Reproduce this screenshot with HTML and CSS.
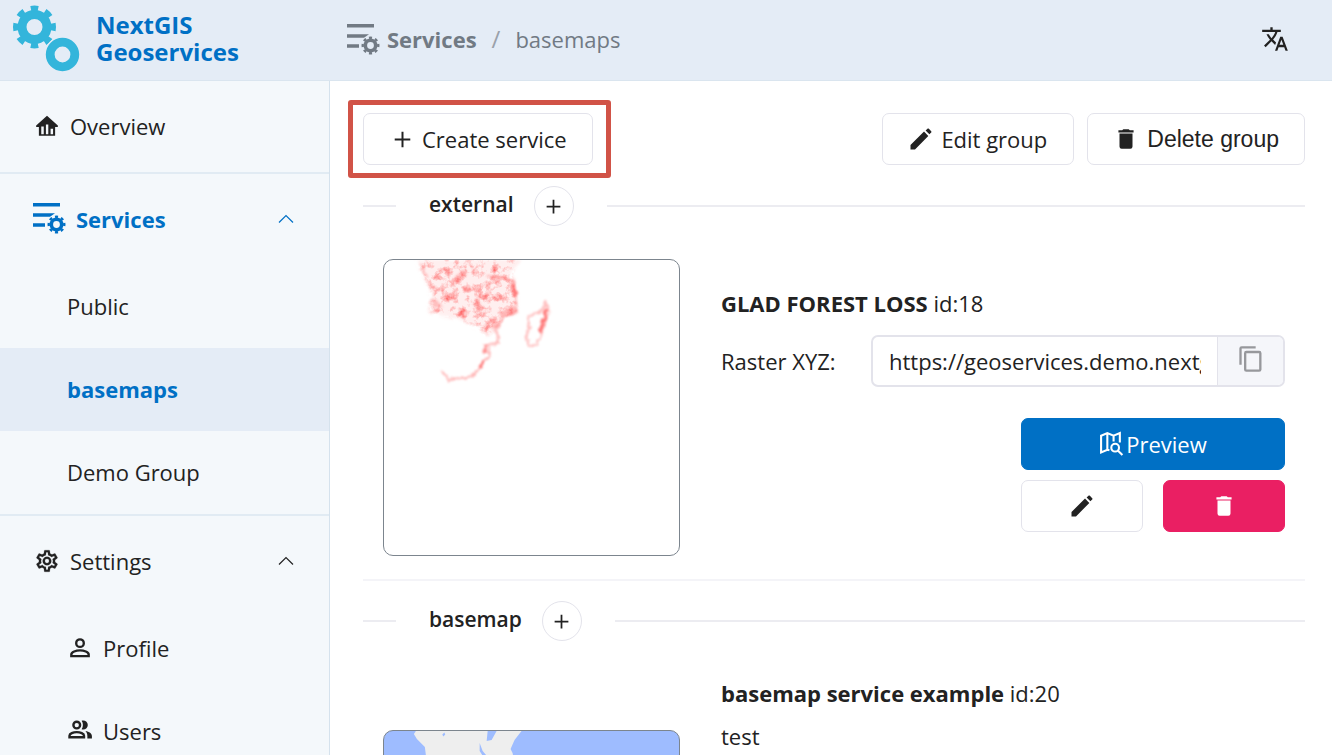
FILE: index.html
```html
<!DOCTYPE html>
<html lang="en">
<head>
<meta charset="utf-8">
<title>NextGIS Geoservices</title>
<link rel="stylesheet" href="styles.css">
</head>
<body>
<svg class="sprite" aria-hidden="true">
  <symbol id="i-services" viewBox="0 0 33 31">
    <path fill="currentColor" d="M0 0h27v3.6H0zM0 10.2h22l-5 3.6H0zM0 20.200h12v3.600H0z"/>
    <g fill="none" stroke="currentColor">
      <circle cx="23.500" cy="21.500" r="5.200" stroke-width="3.600"/>
      <circle cx="23.500" cy="21.500" r="7.800" stroke-width="2.400" pathLength="16" stroke-dasharray="1" transform="rotate(-11.250 23.500 21.500)"/>
    </g>
  </symbol>
  <symbol id="i-plus" viewBox="0 0 24 24"><path fill="none" stroke="currentColor" stroke-width="2.800" d="M12 1v22M1 12h22"/></symbol>
  <symbol id="i-pencil" viewBox="0 0 24 24"><path fill="currentColor" d="M20.710 4.040c.39-.39.39-1.040 0-1.410l-2.340-2.340c-.37-.39-1.020-.39-1.410 0l-1.840 1.830 3.750 3.750M0 16.500V21h4.500L17.810 7.400l-4.300-4.300L0 16.500z" transform="translate(1.500 1.500)"/></symbol>
  <symbol id="i-trash" viewBox="0 0 24 24"><path fill="currentColor" d="M19 4h-3.500l-1-1h-5l-1 1H5v2h14M6 19a2 2 0 0 0 2 2h8a2 2 0 0 0 2-2V7H6v12z"/></symbol>
  <symbol id="i-chevron" viewBox="0 0 16 10"><path fill="none" stroke="currentColor" stroke-width="1.200" d="M1 8.500l7-7 7 7"/></symbol>
</svg>

<header class="header">
  <a class="brand" href="#">
    <svg class="brand-logo" viewBox="0 0 68 68" aria-hidden="true">
      <g fill="none" stroke="#33b5db">
        <circle cx="22.500" cy="22" r="12.500" stroke-width="9"/>
        <circle cx="22.500" cy="22" r="18.600" stroke-width="5.800" pathLength="16" stroke-dasharray="1" transform="rotate(-11.250 22.500 22)"/>
        <circle cx="50.500" cy="49.500" r="13" stroke="#e4ecf6" stroke-width="10"/>
        <circle cx="50.500" cy="49.500" r="12.300" stroke-width="8.800"/>
      </g>
    </svg>
    <span class="brand-name">NextGIS Geoservices</span>
  </a>
  <nav class="breadcrumb" aria-label="Breadcrumb">
    <a class="crumb" href="#"><svg class="icon-services"><use href="#i-services"/></svg>Services</a>
    <span class="crumb-separator">/</span>
    <span>basemaps</span>
  </nav>
  <button class="language" type="button" aria-label="Language">
    <svg viewBox="0 0 24 24"><path fill="currentColor" d="M12.900 15l-2.600-2.500h.1c1.700-1.900 3-4.100 3.700-6.500H17V4h-7V2H8v2H1v2h11.200c-.7 1.900-1.800 3.800-3.200 5.300C8.100 10.300 7.300 9.200 6.700 8h-2c.7 1.600 1.700 3.200 3 4.600l-5.100 5L4 19l5-5 3.100 3.100.8-2.100M18.500 10h-2L12 22h2l1.100-3h4.800l1.100 3h2l-4.500-12m-2.600 7l1.600-4.300 1.600 4.300h-3.200z"/></svg>
  </button>
</header>

<div class="shell">
  <nav class="sidebar" aria-label="Main">
    <div class="menu-group">
      <a class="menu-title" href="#">
        <svg class="icon-menu" viewBox="0 0 24 24"><path fill="#222" fill-rule="evenodd" d="M12 2.500L22 11.500V13h-2.500v8h-15v-8H2v-1.500zM6.700 12.500v7H9v-7zM11 10.500v9h2.200v-9zM15.300 14.500v5h2.300v-5z"/></svg>Overview
      </a>
    </div>
    <div class="menu-group">
      <button class="menu-title menu-title-active" type="button" aria-expanded="true">
        <svg class="icon-services"><use href="#i-services"/></svg>Services
        <svg class="chevron"><use href="#i-chevron"/></svg>
      </button>
      <a class="menu-item" href="#">Public</a>
      <a class="menu-item menu-item-active" href="#">basemaps</a>
      <a class="menu-item" href="#">Demo Group</a>
    </div>
    <div class="menu-group">
      <button class="menu-title" type="button" aria-expanded="true">
        <svg class="icon-menu" viewBox="0 0 24 24"><path fill="currentColor" stroke="currentColor" stroke-width=".2" d="M12 8a4 4 0 0 1 4 4 4 4 0 0 1-4 4 4 4 0 0 1-4-4 4 4 0 0 1 4-4m0 2a2 2 0 0 0-2 2 2 2 0 0 0 2 2 2 2 0 0 0 2-2 2 2 0 0 0-2-2m-2 12c-.25 0-.46-.18-.5-.42l-.37-2.650c-.63-.25-1.170-.59-1.690-.99l-2.490 1.010c-.22.080-.49 0-.61-.22l-2-3.460a.493.493 0 0 1 .12-.64l2.110-1.660L4.500 12l.07-1-2.110-1.630a.493.493 0 0 1-.12-.64l2-3.460c.12-.22.39-.31.61-.22l2.490 1c.52-.39 1.060-.73 1.690-.98l.37-2.650c.04-.24.25-.42.5-.42h4c.25 0 .46.18.5.42l.37 2.650c.63.25 1.170.59 1.690.98l2.490-1c.22-.09.49 0 .61.22l2 3.460c.13.220.07.490-.12.640L19.430 11l.07 1-.07 1 2.110 1.630c.19.150.25.420.12.640l-2 3.460c-.12.220-.39.310-.61.220l-2.490-1c-.52.390-1.060.730-1.690.980l-.37 2.650c-.04.240-.25.420-.5.420h-4m1.250-18l-.37 2.610c-1.200.25-2.260.89-3.030 1.780L5.440 7.350l-.75 1.300L6.800 10.200a5.550 5.550 0 0 0 0 3.600l-2.120 1.560.75 1.300 2.430-1.040c.77.880 1.820 1.520 3.010 1.760l.37 2.620h1.520l.37-2.610c1.190-.25 2.240-.89 3.010-1.770l2.430 1.040.75-1.300-2.120-1.550c.4-1.170.4-2.440 0-3.610l2.110-1.550-.75-1.300-2.410 1.040a5.420 5.420 0 0 0-3.030-1.770L12.750 4h-1.500z"/></svg>Settings
        <svg class="chevron"><use href="#i-chevron"/></svg>
      </button>
      <a class="menu-item" href="#">
        <svg class="icon-menu" viewBox="0 0 24 24"><g fill="none" stroke="currentColor" stroke-width="2.200"><circle cx="12" cy="7.500" r="3.500"/><path d="M4 19.500v-1.500c0-2.300 4.300-3.800 8-3.800s8 1.500 8 3.800v1.500z"/></g></svg>Profile
      </a>
      <a class="menu-item" href="#">
        <svg class="icon-menu" viewBox="0 0 24 24"><g fill="none" stroke="currentColor" stroke-width="2.200"><circle cx="9" cy="6.500" r="3.100"/><path d="M2.300 17.800v-1.500c0-1.900 3.400-3.300 6.700-3.300s6.700 1.400 6.700 3.300v1.500z"/></g><path fill="currentColor" d="M13.500 2.600c3-.8 5.700 1 5.700 3.900s-2.700 4.800-5.700 3.900c1.600-2.200 1.600-5.600 0-7.800zM17 11.900c3.600.6 6 2.200 6 4.800v2.200h-4.200v-2.300c0-2-.6-3.600-1.800-4.700z"/></svg>Users
      </a>
    </div>
  </nav>

  <main class="content">
    <div class="toolbar">
      <div class="callout"><button class="btn btn-create" type="button"><svg class="icon-plus"><use href="#i-plus"/></svg>Create service</button></div>
      <div class="toolbar-actions">
        <button class="btn btn-edit" type="button"><svg class="icon"><use href="#i-pencil"/></svg>Edit group</button>
        <button class="btn btn-delete" type="button"><svg class="icon-trash"><use href="#i-trash"/></svg>Delete group</button>
      </div>
    </div>

    <div class="divider">
      <h2>external</h2>
      <button class="btn-round" type="button" aria-label="Add external service"><svg><use href="#i-plus"/></svg></button>
    </div>
    <section class="service">
      <svg class="thumb" viewBox="0 0 296 296" role="img" aria-label="Forest loss map">
        <defs>
          <filter id="grain" x="0" y="0" width="296" height="296" filterUnits="userSpaceOnUse" color-interpolation-filters="sRGB">
            <feTurbulence type="fractalNoise" baseFrequency="0.120" numOctaves="4" seed="8"/>
            <feColorMatrix values="0 0 0 0 1  0 0 0 0 0.380  0 0 0 0 0.380  2 0 0 0 -0.880" result="noise"/>
            <feGaussianBlur in="SourceAlpha" stdDeviation="2" result="shape"/>
            <feComposite in="noise" in2="shape" operator="in" result="cut"/>
            <feGaussianBlur in="cut" stdDeviation="0.500"/>
          </filter>
          <filter id="rough" x="0" y="0" width="296" height="296" filterUnits="userSpaceOnUse" color-interpolation-filters="sRGB">
            <feTurbulence type="fractalNoise" baseFrequency="0.200" numOctaves="2" seed="3" result="n"/>
            <feDisplacementMap in="SourceGraphic" in2="n" scale="6" xChannelSelector="R" yChannelSelector="G" result="d"/>
            <feGaussianBlur in="d" stdDeviation="0.900"/>
          </filter>
        </defs>
        <path fill="#ff5050" fill-opacity="0.090" filter="url(#rough)" d="M33 0l8 17 7 16-2 19 27 7 20 8 14 9 12-18 14-6-2-29-5-8L138 0z"/>
        <path filter="url(#grain)" d="M33 0l8 17 7 16-2 19 27 6 20 9 10 8 8-5 8-12 14-6-2-29-4-9L134 0z"/>
        <g filter="url(#rough)" fill="none" stroke="#ff5050" stroke-linecap="round" stroke-linejoin="round">
          <path stroke-opacity=".4" stroke-width="2" d="M37 4l6 13M103 16l20 2 8 5 2 29-14 6-8 12 4 7-1 6-13 2"/>
          <path stroke-opacity=".4" stroke-width="2.500" d="M106 86v11l-7 6-6 10-7 4-13 2-9 2-4-8"/>
          <path stroke-opacity=".35" stroke-width="7" d="M119 55l10-5"/>
          <path stroke-opacity=".3" stroke-width="6" d="M50 42l5 4M73 19l7-6M92 43l5 5M110 64l3 3"/>
          <path stroke-opacity=".6" stroke-width="3.500" d="M101 86l1 7M99 102l-2 4M129 25l3 10"/>
          <path stroke-opacity=".35" stroke-width="2.500" d="M163 42l2 10-7 21-5 13h-8l-2-11 3-7-2-11 14-5z"/>
          <path stroke-opacity=".75" stroke-width="3.500" d="M163 50l-3 12-4 10"/>
        </g>
      </svg>
      <div class="service-info">
        <h3>GLAD FOREST LOSS <span>id:18</span></h3>
        <div class="field">
          <label for="xyz">Raster XYZ:</label>
          <div class="input-group">
            <input id="xyz" type="text" readonly value="https://geoservices.demo.nextgis.com">
            <button type="button" aria-label="Copy"><svg viewBox="0 0 24 24"><path fill="currentColor" d="M19 21H8V7h11m0-2H8a2 2 0 0 0-2 2v14a2 2 0 0 0 2 2h11a2 2 0 0 0 2-2V7a2 2 0 0 0-2-2m-3-4H4a2 2 0 0 0-2 2v14h2V3h12V1z"/></svg></button>
          </div>
        </div>
        <div class="actions">
          <button class="btn btn-primary" type="button"><svg class="icon-preview" viewBox="0 0 24 24"><g fill="none" stroke="currentColor" stroke-width="2"><path d="M10 18.500L8 18l-6 2.500V4.500L8 2l6 2.500L20 2v9M8 2v16M14 4.500V10"/><circle cx="15.500" cy="16" r="3.700"/><path d="M18 18.700l4.500 4.300"/></g></svg>Preview</button>
          <button class="btn" type="button" aria-label="Edit"><svg class="icon"><use href="#i-pencil"/></svg></button>
          <button class="btn btn-danger" type="button" aria-label="Delete"><svg class="icon-trash"><use href="#i-trash"/></svg></button>
        </div>
      </div>
    </section>

    <div class="divider">
      <h2>basemap</h2>
      <button class="btn-round" type="button" aria-label="Add basemap service"><svg><use href="#i-plus"/></svg></button>
    </div>
    <section class="service service-tall">
      <svg class="thumb thumb-sea" viewBox="0 0 296 296" role="img" aria-label="Basemap">
        <path fill="#eee" d="M32 0l-2 3 3 5 8 8 2 16 8 20h84l-6-30-2-4 4-9 7-9z"/>
        <path fill="#9ebcff" d="M104 0h9l-5 9-5 1zM96 12l3 8 5 6-3 2-5-8zM58.500 3.500l2-2 1 2-2 2z"/>
      </svg>
      <div class="service-info">
        <h3>basemap service example <span>id:20</span></h3>
        <p>test</p>
      </div>
    </section>
  </main>
</div>
</body>
</html>
```
FILE: styles.css
```css
* { box-sizing: border-box; }

body {
  margin: 0;
  height: 100vh;
  overflow: hidden;
  display: flex;
  flex-direction: column;
  background: #fff;
  color: #222;
  font: 22px/32px "Open Sans", "Noto Sans", sans-serif;
}

a { color: inherit; text-decoration: none; }
button, input { font: inherit; color: inherit; }
button { cursor: pointer; }
svg { flex: none; }
.sprite { position: absolute; width: 0; height: 0; }

.header {
  flex: none;
  display: flex;
  align-items: center;
  height: 81px;
  padding-bottom: 2px;
  background: #e4ecf6;
  border-bottom: 1px solid #dae5ef;
}

.brand {
  flex: none;
  display: flex;
  align-items: center;
  gap: 16px;
  width: 347px;
  padding-left: 12px;
  color: #0070c5;
  font-size: 24px;
  line-height: 27px;
  font-weight: 700;
}
.brand-logo { width: 68px; height: 68px; }
.brand-name { width: min-content; padding-bottom: 2px; }

.breadcrumb {
  flex: 1;
  display: flex;
  align-items: center;
  gap: 15px;
  color: #717a84;
}
.crumb { display: flex; align-items: center; gap: 7px; font-weight: 700; }
.crumb-separator { color: #9aa1aa; font-size: 24px; }
.icon-services { width: 33px; height: 31px; }

.language {
  display: flex;
  margin-right: 43px;
  padding: 0;
  border: 0;
  background: none;
}
.language svg { width: 28px; height: 28px; }

.shell { flex: 1; min-height: 0; display: flex; }

.sidebar {
  flex: none;
  width: 330px;
  overflow: hidden;
  background: #f4f8fb;
  border-right: 1px solid #d5e2ed;
}
.menu-group { border-bottom: 2px solid #e1ebf3; }
.menu-title {
  display: flex;
  align-items: center;
  gap: 10px;
  width: 100%;
  height: 91px;
  padding: 0 35px 2px 34px;
  border: 0;
  background: none;
}
.menu-title-active { padding-left: 33px; color: #0070c5; font-weight: 700; }
.icon-menu { width: 26px; height: 26px; }
.chevron { width: 16px; height: 10px; margin-left: auto; }
.menu-item {
  display: flex;
  align-items: center;
  gap: 10px;
  height: 83px;
  padding: 0 0 2px 67px;
}
.menu-item-active { background: #e4ecf6; color: #0070c5; font-weight: 700; }

.content {
  flex: 1;
  min-width: 0;
  overflow: hidden;
  padding: 32px 27px 0 33px;
}
.toolbar, .toolbar-actions { display: flex; justify-content: space-between; }
.toolbar { margin-bottom: 21px; }
.toolbar-actions { gap: 13px; }

.btn {
  display: flex;
  align-items: center;
  justify-content: center;
  gap: 8px;
  height: 52px;
  padding: 0 26px;
  border: 1px solid #e3e3eb;
  border-radius: 7px;
  background: #fff;
}
.btn-create { gap: 11px; padding: 0 25px 0 30px; }
.btn-delete { padding: 0 25px; font-family: "Liberation Sans", Arial, sans-serif; font-size: 23px; }
.icon { width: 24px; height: 24px; }
.icon-trash { width: 26px; height: 26px; }
.icon-plus { width: 17px; height: 17px; }

.callout { position: relative; }
.callout::after {
  content: "";
  position: absolute;
  inset: -13px -18px -13px -15px;
  border: 5px solid #d15347;
  border-radius: 3px;
  pointer-events: none;
}

.divider { display: flex; align-items: center; }
.divider::before, .divider::after { content: ""; height: 2px; background: #ececf1; }
.divider::before { width: 33px; margin-right: 33px; }
.divider::after { flex: 1; margin-left: 33px; }
.divider h2 { margin: 0 20px 5px 0; font-size: 21px; font-weight: 600; }
.btn-round {
  display: flex;
  align-items: center;
  justify-content: center;
  width: 40px;
  height: 40px;
  padding: 0;
  border: 1px solid #e3e3eb;
  border-radius: 50%;
  background: #fff;
}
.btn-round svg { width: 15px; height: 15px; }

.service {
  display: flex;
  align-items: center;
  gap: 41px;
  margin-bottom: 20px;
  padding: 33px 20px 23px;
  border-bottom: 2px solid #f4f4f8;
}
.service-tall .service-info { height: 408px; }
.thumb {
  width: 297px;
  height: 297px;
  border: 1px solid #7c858e;
  border-radius: 10px;
}
.thumb-sea { background: #9ebcff; }
.service-info { flex: 1; min-width: 0; }
.service-info h3 { margin: 0; font-size: 22px; line-height: 38px; }
.service-info h3 span { font-weight: 400; }
.service-info p { margin: 0; line-height: 48px; }

.field { display: flex; align-items: center; margin: 13px 0 31px; }
.field label { width: 150px; }
.input-group {
  flex: 1;
  min-width: 0;
  display: flex;
  height: 52px;
  border: 2px solid #e3e3eb;
  border-radius: 7px;
  overflow: hidden;
}
.input-group input {
  flex: 1;
  min-width: 0;
  margin: 0 16px;
  padding: 0;
  border: 0;
  outline: 0;
  background: none;
}
.input-group button {
  display: flex;
  align-items: center;
  justify-content: center;
  width: 66px;
  padding: 0 0 4px;
  border: 0;
  border-left: 1px solid #e3e3eb;
  background: #f5f6fa;
  color: #97989c;
}
.input-group button svg { width: 28px; height: 28px; }

.actions {
  display: grid;
  grid-template-columns: 122px 122px;
  justify-content: end;
  gap: 10px 20px;
}
.btn-primary {
  grid-column: 1 / -1;
  gap: 2px;
  border-color: #0070c5;
  background: #0070c5;
  color: #fff;
}
.icon-preview { width: 25px; height: 25px; }
.btn-danger { border-color: #ea1f63; background: #ea1f63; color: #fff; }
```
